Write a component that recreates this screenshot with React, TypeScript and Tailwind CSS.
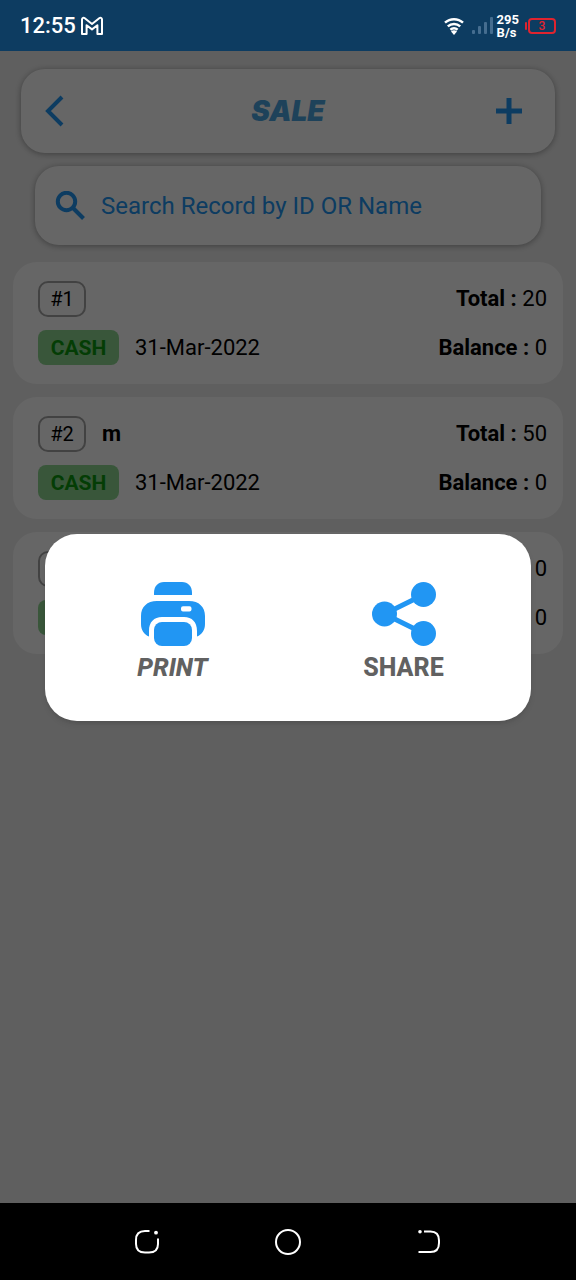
import type { ReactNode } from "react";

interface SaleRecord {
  id: number;
  name?: string;
  type: string;
  date: string;
  total: number;
  balance: number;
}

const records: SaleRecord[] = [
  { id: 1, type: "CASH", date: "31-Mar-2022", total: 20, balance: 0 },
  { id: 2, name: "m", type: "CASH", date: "31-Mar-2022", total: 50, balance: 0 },
  { id: 3, type: "CASH", date: "31-Mar-2022", total: 0, balance: 0 },
];

function MailIcon() {
  return (
    <svg width="24" height="20" viewBox="0 0 24 20" fill="none" stroke="#fff" strokeWidth="2" strokeLinejoin="round">
      <path d="M2 18V3.6C2 1.8 3.6 1.4 4.8 2.3L12 8l7.2-5.7C20.4 1.4 22 1.8 22 3.6V18h-4.6V9.2L12 13.4 6.6 9.2V18Z" />
    </svg>
  );
}

function WifiIcon() {
  return (
    <svg width="20" height="18" viewBox="0 0 20 18" fill="none" stroke="#fff" strokeWidth="2.5">
      <path d="M1 5.6a13.4 13.4 0 0 1 18 0" />
      <path d="M3.8 9.3a9.2 9.2 0 0 1 12.4 0" />
      <path d="M6.4 12.7a5.4 5.4 0 0 1 7.2 0" />
      <path d="M10 18 7 14.600a4.400 4.400 0 0 1 6 0Z" fill="#fff" stroke="none" />
    </svg>
  );
}

function SignalIcon() {
  return (
    <svg width="21" height="17" viewBox="0 0 21 17" fill="#456d8f">
      <rect x="0" y="13" width="3" height="4" rx="1" />
      <rect x="6" y="9" width="3" height="8" rx="1" />
      <rect x="12" y="5" width="3" height="12" rx="1" />
      <rect x="18" y="0" width="3" height="17" rx="1" />
    </svg>
  );
}

function PrinterIcon() {
  return (
    <svg width="64" height="64" viewBox="0 0 64 64" fill="#2196f3">
      <path d="M13 13V11C13 4 17 0 23 0h18c6 0 10 4 10 11v2Z" />
      <path
        fillRule="evenodd"
        d="M16 19h32c10 0 16 6 16 15v8c0 6-3 10.500-8 12.500V49c0-9-5-14-13-14H21c-8 0-13 5-13 14v5.500C3 52.500 0 48 0 42v-8c0-9 6-15 16-15Zm26 5.200a2 2 0 0 0-2 2v1.200a2 2 0 0 0 2 2h6.500a2 2 0 0 0 2-2v-1.200a2 2 0 0 0-2-2Z"
      />
      <rect x="13" y="40" width="38" height="24" rx="8" />
    </svg>
  );
}

function ShareIcon() {
  return (
    <svg width="64" height="64" viewBox="0 0 64 64" fill="#2196f3">
      <path d="M52 12.500 12.500 32 52 51.500" fill="none" stroke="#2196f3" strokeWidth="5" />
      <circle cx="12.500" cy="32" r="12.500" />
      <circle cx="51.500" cy="12.500" r="12.500" />
      <circle cx="51.500" cy="51.500" r="12.500" />
    </svg>
  );
}

function StatusBar() {
  return (
    <div className="flex h-[51px] items-center justify-between bg-[#0d3c61] px-5 text-white">
      <div className="flex items-center gap-1 text-[22px] leading-6 font-medium">
        <span>12:55</span>
        <MailIcon />
      </div>
      <div className="flex items-center">
        <WifiIcon />
        <span className="ml-2">
          <SignalIcon />
        </span>
        <div className="ml-1 text-[13px] leading-[13px] font-bold">
          <div>295</div>
          <div>B/s</div>
        </div>
        <div className="ml-1.5 flex items-center gap-px">
          <span className="h-2 w-0.5 rounded-sm bg-[#e0242f]" />
          <span className="flex h-4 w-7 items-center justify-center rounded-sm border-2 border-[#e0242f] text-xs leading-3 font-medium text-[#e0242f]">
            3
          </span>
        </div>
      </div>
    </div>
  );
}

function Header() {
  return (
    <header className="mx-[21px] flex h-[84px] items-center justify-between rounded-3xl bg-white px-5 text-[#2196f3] shadow-[0_1px_6px_rgba(0,0,0,0.35)]">
      <button type="button" aria-label="Back" className="flex h-10 w-[52px] items-center pl-1">
        <svg width="20" height="32" viewBox="0 0 20 32" fill="none" stroke="currentColor" strokeWidth="4">
          <path d="M17 2 3 16l14 14" />
        </svg>
      </button>
      <h1 className="font-[Inter,sans-serif] text-[28px] leading-8 font-black text-[#4ba6e0] italic">SALE</h1>
      <button type="button" aria-label="Add sale" className="flex h-10 w-[52px] items-center justify-center">
        <svg width="26" height="26" viewBox="0 0 26 26" fill="none" stroke="currentColor" strokeWidth="5">
          <path d="M13 0v26M0 13h26" />
        </svg>
      </button>
    </header>
  );
}

function SearchBox() {
  return (
    <label className="mx-[35px] mt-[13px] flex h-[79px] items-center gap-4 rounded-3xl bg-white px-5 text-[#2196f3] shadow-[0_1px_6px_rgba(0,0,0,0.35)]">
      <svg width="30" height="30" viewBox="0 0 30 30" fill="none" stroke="currentColor" strokeWidth="4" className="shrink-0">
        <circle cx="11.500" cy="10.500" r="8.700" />
        <path d="m18 17 10.500 10.500" />
      </svg>
      <input
        type="search"
        aria-label="Search records"
        placeholder="Search Record by ID OR Name"
        className="w-full min-w-0 bg-transparent text-2xl outline-none placeholder:text-[#2196f3]"
      />
    </label>
  );
}

function Amount({ label, value }: { label: string; value: number }) {
  return (
    <div>
      <span className="font-bold">{label} : </span>
      {value}
    </div>
  );
}

function RecordCard({ record }: { record: SaleRecord }) {
  return (
    <li className="flex flex-col gap-[13px] rounded-3xl bg-white py-[19px] pr-4 pl-[25px] text-[22px] leading-6 text-black">
      <div className="flex h-9 items-center justify-between">
        <div className="flex items-center gap-4">
          <span className="flex h-9 w-12 items-center justify-center rounded-[10px] border-2 border-[#a6a6a6] text-xl">
            #{record.id}
          </span>
          {record.name && <span className="font-bold">{record.name}</span>}
        </div>
        <Amount label="Total" value={record.total} />
      </div>
      <div className="flex h-[35px] items-center justify-between">
        <div className="flex items-center gap-4">
          <span className="flex h-[35px] w-[81px] items-center justify-center rounded-lg bg-[#8fd892] text-[21px] font-bold text-[#0a9a0e]">
            {record.type}
          </span>
          <span>{record.date}</span>
        </div>
        <Amount label="Balance" value={record.balance} />
      </div>
    </li>
  );
}

function DialogAction({ label, children }: { label: ReactNode; children: ReactNode }) {
  return (
    <button type="button" className="flex flex-1 flex-col items-center gap-1.5">
      {children}
      <span className="text-[25px] leading-8 font-extrabold text-[#616161]">{label}</span>
    </button>
  );
}

function ActionDialog() {
  return (
    <div className="absolute inset-0 flex items-center bg-black/60 px-[45px]">
      <div
        role="dialog"
        aria-label="Sale actions"
        className="flex w-full rounded-[32px] bg-white px-3 pt-12 pb-[37px] shadow-md"
      >
        <DialogAction label={<em>PRINT</em>}>
          <PrinterIcon />
        </DialogAction>
        <DialogAction label="SHARE">
          <ShareIcon />
        </DialogAction>
      </div>
    </div>
  );
}

function NavBar() {
  return (
    <nav className="flex h-[77px] items-center justify-center gap-[114px] bg-black text-white">
      <button type="button" aria-label="Recent apps">
        <svg width="26" height="26" viewBox="0 0 26 26" fill="none" stroke="currentColor" strokeWidth="2">
          <path d="M15.500 2H11C5 2 2 5 2 11v4c0 6 3 8.500 9 8.500h4c6 0 9-2.500 9-8.500V9.500" />
          <circle cx="22" cy="3.700" r="1.900" fill="currentColor" stroke="none" />
        </svg>
      </button>
      <button type="button" aria-label="Home">
        <svg width="28" height="28" viewBox="0 0 28 28" fill="none" stroke="currentColor" strokeWidth="2">
          <circle cx="14" cy="14" r="12" />
        </svg>
      </button>
      <button type="button" aria-label="Back to previous screen">
        <svg width="26" height="26" viewBox="0 0 26 26" fill="none" stroke="currentColor" strokeWidth="2">
          <path d="M8 2.500h6.500c6 0 8.500 3 8.500 9V14c0 6-2.500 9-8.500 9H2.500" />
          <circle cx="4" cy="2.700" r="1.800" fill="currentColor" stroke="none" />
        </svg>
      </button>
    </nav>
  );
}

export default function App() {
  return (
    <div className="flex min-h-screen flex-col bg-[#eeeeee] font-[Roboto,sans-serif]">
      <StatusBar />
      <main className="relative flex-1 pt-[18px]">
        <Header />
        <SearchBox />
        <ul className="mx-[13px] mt-[17px] flex flex-col gap-[13px]">
          {records.map((record) => (
            <RecordCard key={record.id} record={record} />
          ))}
        </ul>
        <ActionDialog />
      </main>
      <NavBar />
    </div>
  );
}
